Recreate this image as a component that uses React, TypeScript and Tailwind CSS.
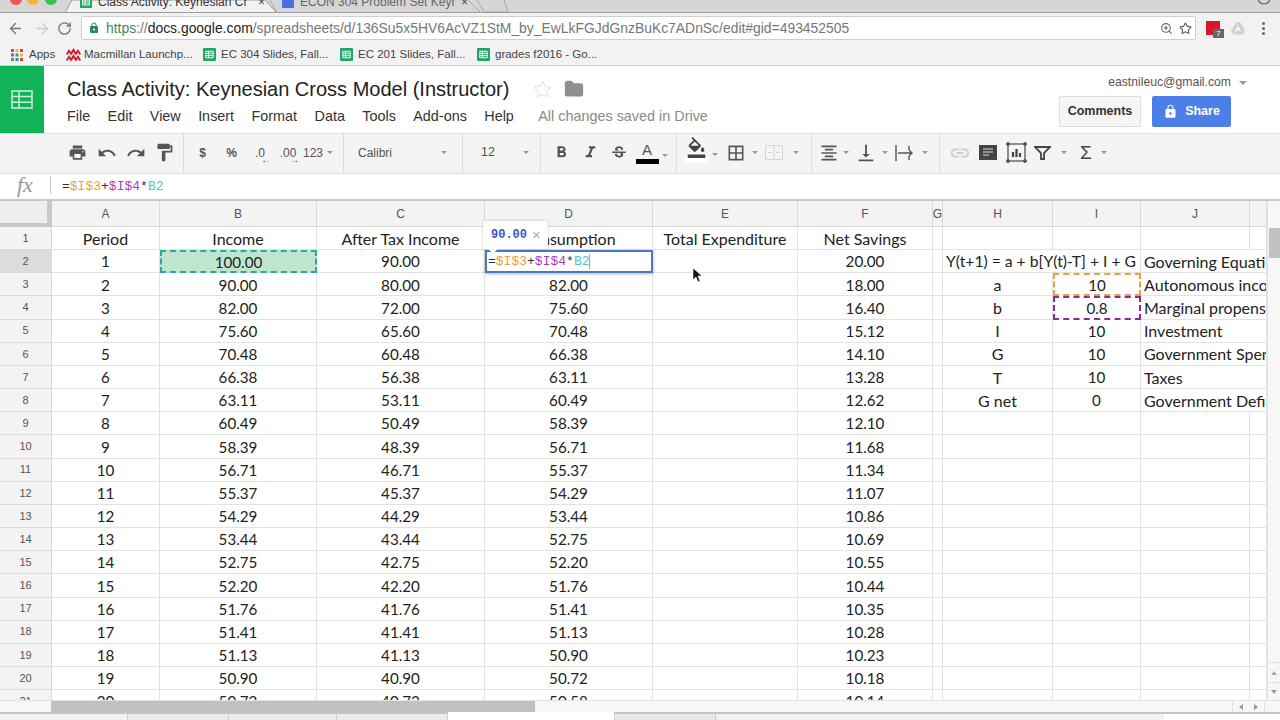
import { Fragment } from 'react';
import { ArrowLeft, ArrowRight, RotateCw, Star, ZoomIn, Folder } from 'lucide-react';
import {
  MdPrint, MdUndo, MdRedo, MdFormatPaint, MdFormatBold, MdFormatItalic, MdStrikethroughS,
  MdFormatColorFill, MdBorderAll, MdFormatAlignCenter, MdVerticalAlignBottom, MdLink, MdLock,
} from 'react-icons/md';

const rows: string[][] = [
  ['1', '100.00', '90.00', '', '20.00'],
  ['2', '90.00', '80.00', '82.00', '18.00'],
  ['3', '82.00', '72.00', '75.60', '16.40'],
  ['4', '75.60', '65.60', '70.48', '15.12'],
  ['5', '70.48', '60.48', '66.38', '14.10'],
  ['6', '66.38', '56.38', '63.11', '13.28'],
  ['7', '63.11', '53.11', '60.49', '12.62'],
  ['8', '60.49', '50.49', '58.39', '12.10'],
  ['9', '58.39', '48.39', '56.71', '11.68'],
  ['10', '56.71', '46.71', '55.37', '11.34'],
  ['11', '55.37', '45.37', '54.29', '11.07'],
  ['12', '54.29', '44.29', '53.44', '10.86'],
  ['13', '53.44', '43.44', '52.75', '10.69'],
  ['14', '52.75', '42.75', '52.20', '10.55'],
  ['15', '52.20', '42.20', '51.76', '10.44'],
  ['16', '51.76', '41.76', '51.41', '10.35'],
  ['17', '51.41', '41.41', '51.13', '10.28'],
  ['18', '51.13', '41.13', '50.90', '10.23'],
  ['19', '50.90', '40.90', '50.72', '10.18'],
  ['20', '50.72', '40.72', '50.58', '10.14'],
];

const params = [
  ['a', '10', 'Autonomous income'],
  ['b', '0.8', 'Marginal propensity'],
  ['I', '10', 'Investment'],
  ['G', '10', 'Government Spending'],
  ['T', '10', 'Taxes'],
  ['G net', '0', 'Government Deficit'],
];

const cell = 'flex items-center justify-center border-r border-b border-[#e2e2e2] whitespace-nowrap pt-[1px]';
const label = 'text-[16px]';
const rowHead = 'flex items-center justify-center border-r border-b border-[#d9d9d9] text-[11px] text-[#555]';
const colHead = 'flex items-center justify-center border-r border-b border-[#d9d9d9] bg-[#f3f3f3] text-[12px] text-[#555]';
const menus = ['File', 'Edit', 'View', 'Insert', 'Format', 'Data', 'Tools', 'Add-ons', 'Help'];

function SheetIcon({ size = 13 }: { size?: number }) {
  return (
    <svg width={size} height={size} viewBox="0 0 14 14">
      <rect width="14" height="14" rx="1" fill="#23a566" />
      <path d="M3 3.5h8v7H3z M3 5.8h8 M3 8.2h8 M6 3.5v7" fill="none" stroke="#fff" strokeWidth="1" />
    </svg>
  );
}

function Caret({ className = '' }: { className?: string }) {
  return <span className={`inline-block h-0 w-0 border-x-[3px] border-t-[3px] border-x-transparent border-t-[#999] ${className}`} />;
}

function Slot({ w, children }: { w: string; children: React.ReactNode }) {
  return <div className={`flex shrink-0 items-center justify-center ${w}`}>{children}</div>;
}

function Formula() {
  return (
    <span className="font-['Liberation_Mono',monospace] text-[13px] text-[#333]">
      =<span className="text-[#e5a33d]">$I$3</span>+<span className="text-[#a53fb3]">$I$4</span>*<span className="text-[#53c4d2]">B2</span>
    </span>
  );
}

function ChromeBars() {
  return (
    <>
      <div className="relative h-[13px] shrink-0 overflow-hidden border-b border-[#9c9c9c] bg-[#d6d6d6]">
        <svg className="absolute inset-0" width="1280" height="13">
          <path d="M65 13 L72 0 H265 L277 13 Z" fill="#f2f2f2" stroke="#9c9c9c" />
          <path d="M277 13 L270 0 M468 0 L481 13 M477 0 L484 12 H508 L504 0" fill="none" stroke="#a5a5a5" />
          <circle cx="16" cy="-1" r="6" fill="#f0544c" />
          <circle cx="33" cy="-1" r="6" fill="#f2b53c" />
          <circle cx="51" cy="-1" r="6" fill="#3cc04c" />
          <circle cx="1264" cy="-2" r="6" fill="none" stroke="#666" strokeWidth="1.2" />
        </svg>
        <div className="relative -mt-[6px] flex h-[16px] items-center text-[12px]">
          <div className="ml-[80px] flex w-[187px] items-center">
            <SheetIcon size={12} />
            <span className="ml-[6px] w-[157px] overflow-hidden whitespace-nowrap text-[#333]">Class Activity: Keynesian Cr</span>
            <span className="ml-[3px] text-[#444]">×</span>
          </div>
          <div className="ml-[15px] flex w-[190px] items-center">
            <span className="h-[12px] w-[12px] rounded-[1px] bg-[#4e6fe0]" />
            <span className="ml-[6px] w-[156px] overflow-hidden whitespace-nowrap text-[#666]">ECON 304 Problem Set Keyne</span>
            <span className="ml-[5px] text-[#444]">×</span>
          </div>
        </div>
      </div>
      <div className="flex h-[30px] shrink-0 items-center bg-[#f2f2f2]">
        <ArrowLeft size={17} className="ml-[7px] text-[#777]" strokeWidth={1.8} />
        <ArrowRight size={17} className="ml-[10px] text-[#ccc]" strokeWidth={1.8} />
        <RotateCw size={15} className="ml-[6px] text-[#777]" strokeWidth={2.2} />
        <div className="ml-[9px] flex h-[24px] w-[1115px] items-center rounded-[2px] border border-[#cfcfcf] bg-white pl-[6px] pr-[3px]">
          <MdLock size={12} className="text-[#2b8a57]" />
          <span className="ml-[6px] whitespace-nowrap text-[13.900px] text-[#777]">
            <span className="text-[#3b8a5e]">https</span>://<span className="text-[#222]">docs.google.com</span>/spreadsheets/d/136Su5x5HV6AcVZ1StM_by_EwLkFGJdGnzBuKc7ADnSc/edit#gid=493452505
          </span>
          <ZoomIn size={13} className="ml-auto text-[#666]" />
          <Star size={13} className="ml-[6px] text-[#555]" />
        </div>
        <div className="relative ml-[10px] h-[14px] w-[14px] bg-[#d6182a]">
          <span className="absolute -bottom-[3px] left-[7px] flex h-[9px] w-[11px] items-center justify-center bg-[#666] text-[8px] text-white">7</span>
        </div>
        <svg className="ml-[11px]" width="14" height="13" viewBox="0 0 14 13">
          <path d="M5 0h4l5 8.5H10L5 0zM4.500 1 0 9l2 3.500L6.500 4.500zM5 9h9l-2 3.500H3z" fill="#d0d0d0" />
        </svg>
        <div className="ml-[17px] flex flex-col gap-[2px]">
          <span className="h-[3px] w-[3px] rounded-full bg-[#666]" />
          <span className="h-[3px] w-[3px] rounded-full bg-[#666]" />
          <span className="h-[3px] w-[3px] rounded-full bg-[#666]" />
        </div>
      </div>
      <div className="flex h-[23px] shrink-0 items-center border-b border-[#d0d0d0] bg-[#f2f2f2] pt-[1px] text-[11.500px] text-[#444]">
        <svg className="ml-[11px]" width="12" height="12" viewBox="0 0 12 12">
          {['#d9453d', '#f2b53c', '#d9453d', '#3c78d8', '#34a853', '#f2b53c', '#34a853', '#3c78d8', '#d9453d'].map((c, i) => (
            <rect key={i} x={(i % 3) * 4.5} y={Math.floor(i / 3) * 4.500} width="3" height="3" fill={c} />
          ))}
        </svg>
        <span className="ml-[6px] w-[37px]">Apps</span>
        <svg width="15" height="14" viewBox="0 0 15 14">
          <path d="M0 6 3 1l2 3 2.500-4L10 4l2-3 3 5-1.500 1L12 4.500 10 7.500 7.500 4 5 7.500 3 4.500 1.500 7z M0 12 3 7l2 3 2.500-4L10 10l2-3 3 5-1.500 1-1.500-2.500-2 3-2.500-3.500-2.500 3.500-2-3L1.500 13z" fill="#d8182c" />
        </svg>
        <span className="ml-[3px] w-[119px] whitespace-nowrap">Macmillan Launchp...</span>
        <SheetIcon />
        <span className="ml-[5px] w-[119px] whitespace-nowrap">EC 304 Slides, Fall...</span>
        <SheetIcon />
        <span className="ml-[5px] w-[119px] whitespace-nowrap">EC 201 Slides, Fall...</span>
        <SheetIcon />
        <span className="ml-[5px] whitespace-nowrap">grades f2016 - Go...</span>
      </div>
    </>
  );
}

function DocHeader() {
  return (
    <div className="flex h-[67px] shrink-0 bg-white">
      <div className="flex w-[44px] items-center justify-center bg-[#10b355]">
        <svg width="22" height="19" viewBox="0 0 22 19" fill="none" stroke="#c9f0d8" strokeWidth="1.5">
          <path d="M1 1h20v17H1z M1 6.500h20 M1 12.200h20 M8 1v17" />
        </svg>
      </div>
      <div className="ml-[23px] flex flex-col">
        <div className="mt-[11px] flex h-[24px] items-center">
          <span className="whitespace-nowrap text-[20px] text-[#222]">Class Activity: Keynesian Cross Model (Instructor)</span>
          <Star size={19} className="ml-[24px] text-[#e6e6e6]" strokeWidth={1.5} />
          <Folder size={20} className="ml-[12px] text-[#8f8f8f]" fill="#8f8f8f" />
        </div>
        <div className="mt-[6px] flex h-[20px] items-center gap-[17.400px] text-[14.400px] text-[#333]">
          {menus.map((m) => (
            <span key={m}>{m}</span>
          ))}
          <span className="ml-[7px] whitespace-nowrap text-[#8a8a8a]">All changes saved in Drive</span>
        </div>
      </div>
      <div className="ml-auto mr-[49px] flex flex-col items-end">
        <div className="mt-[8px] flex h-[16px] items-center text-[12.200px] text-[#555]">
          eastnileuc@gmail.com
        </div>
        <div className="mt-[6px] mr-0 flex gap-[11px]">
          <div className="flex h-[31px] w-[82px] items-center justify-center rounded-[2px] border border-[#dcdcdc] bg-[#f5f5f5] text-[12.500px] font-bold text-[#333]">Comments</div>
          <div className="flex h-[31px] w-[79px] items-center justify-center gap-[7px] rounded-[2px] bg-[#4d7fe8] text-[12.500px] font-bold text-white">
            <MdLock size={15} />
            Share
          </div>
        </div>
      </div>
      <Caret className="absolute left-[1239px] top-[81px] border-x-[4px] border-t-[4px] border-t-[#777]" />
    </div>
  );
}

function Toolbar() {
  const icon = 'shrink-0 text-[#555]';
  const sep = 'flex h-full shrink-0 items-center border-r border-[#dcdcdc] pb-[2px]';
  return (
    <div className="flex h-[41px] shrink-0 items-center border-y border-[#e0e0e0] bg-[#f4f4f4] text-[#555]">
      <div className={`${sep} w-[184px] pl-[63px]`}>
        <Slot w="w-[29px]"><MdPrint size={19} className={icon} /></Slot>
        <Slot w="w-[29px]"><MdUndo size={20} className={icon} /></Slot>
        <Slot w="w-[29px]"><MdRedo size={20} className={icon} /></Slot>
        <Slot w="w-[29px]"><MdFormatPaint size={21} className={icon} /></Slot>
      </div>
      <div className={`${sep} w-[160px] pl-[4px] text-[12px] font-bold`}>
        <Slot w="w-[29px]">$</Slot>
        <Slot w="w-[29px]">%</Slot>
        <Slot w="w-[28px]">
          <span className="relative font-normal">.0<span className="absolute -right-[6px] top-[8px] text-[10px] font-bold">←</span></span>
        </Slot>
        <Slot w="w-[28px]">
          <span className="relative font-normal">.00<span className="absolute -right-[3px] top-[8px] text-[10px] font-bold">→</span></span>
        </Slot>
        <span className="ml-[1px] font-normal">123</span>
        <Caret className="ml-[4px]" />
      </div>
      <div className={`${sep} w-[119px] justify-between pl-[14px] pr-[15px] text-[12px] font-bold`}>
        <span className="font-normal">Calibri</span>
        <Caret />
      </div>
      <div className={`${sep} w-[78px] justify-between pl-[18px] pr-[11px] text-[12.500px]`}>
        <span>12</span>
        <Caret />
      </div>
      <div className={`${sep} w-[136px] pl-[5px]`}>
        <Slot w="w-[30px]"><MdFormatBold size={19} className={icon} /></Slot>
        <Slot w="w-[28px]"><MdFormatItalic size={19} className={icon} /></Slot>
        <Slot w="w-[29px]"><MdStrikethroughS size={18} className={icon} /></Slot>
        <Slot w="w-[28px]">
          <div className="flex flex-col items-center">
            <span className="text-[15px] leading-[16px]">A</span>
            <span className="mt-[1px] h-[5px] w-[23px] bg-black" />
          </div>
        </Slot>
        <Caret className="ml-[1px] mt-[6px]" />
      </div>
      <div className={`${sep} w-[135px] pl-[6px]`}>
        <Slot w="w-[26px]">
          <div className="flex flex-col items-center">
            <MdFormatColorFill size={21} className="-mt-[6px] text-[#444]" />
            <span className="h-[5px] w-[24px] bg-white" />
          </div>
        </Slot>
        <Caret className="ml-[3px] mt-[3px]" />
        <MdBorderAll size={20} className={`${icon} ml-[8px]`} />
        <Caret className="ml-[6px]" />
        <svg className="ml-[7px]" width="18" height="15" viewBox="0 0 18 15" fill="none" stroke="#d5d5d5">
          <path d="M.5.500h17v14H.5z M9 .5v14 M3 7.500h4 M11 7.500h4" />
        </svg>
        <Caret className="ml-[10px]" />
      </div>
      <div className={`${sep} w-[128px] pl-[6px]`}>
        <Slot w="w-[22px]"><MdFormatAlignCenter size={20} className={icon} /></Slot>
        <Caret className="ml-[3px]" />
        <MdVerticalAlignBottom size={22} className={`${icon} ml-[6px]`} />
        <Caret className="ml-[5px]" />
        <svg className="ml-[7px] shrink-0" width="20" height="18" viewBox="0 0 20 18" fill="none" stroke="#555" strokeWidth="1.4">
          <path d="M1 1v16 M14 2v4 M14 12v4 M3 9h14 M14 6l3 3-3 3" />
        </svg>
        <Caret className="ml-[7px]" />
      </div>
      <div className="flex h-full items-center pb-[2px] pl-[9px]">
        <MdLink size={22} className="text-[#cfcfcf]" />
        <svg className="ml-[8px]" width="18" height="15" viewBox="0 0 18 15">
          <path d="M0 0h18v15H0z" fill="#444" />
          <path d="M4 4h10M4 7h10M4 10h6" stroke="#ddd" strokeWidth="1.200" />
        </svg>
        <svg className="ml-[9px]" width="21" height="21" viewBox="0 0 21 21" fill="none" stroke="#555">
          <rect x="2" y="2" width="17" height="17" strokeWidth="1.300" />
          <circle cx="2" cy="2" r="1.500" fill="#555" />
          <circle cx="19" cy="2" r="1.500" fill="#555" />
          <circle cx="2" cy="19" r="1.500" fill="#555" />
          <circle cx="19" cy="19" r="1.500" fill="#555" />
          <path d="M7 15V10M10.500 15V7M14 15v-4" strokeWidth="2.200" stroke="#444" />
        </svg>
        <svg className="ml-[7px]" width="17" height="14" viewBox="0 0 17 14" fill="none" stroke="#444" strokeWidth="1.800">
          <path d="M1 1h15L10 7v6H7V7z" />
        </svg>
        <Caret className="ml-[10px]" />
        <span className="ml-[13px] text-[19px] leading-none text-[#444]">Σ</span>
        <Caret className="ml-[9px]" />
      </div>
    </div>
  );
}

function Sheet() {
  return (
    <div className="flex h-[501px] shrink-0 border-t-2 border-[#c8c8c8] font-['Lato',sans-serif]">
      <div className="relative w-[1267px] shrink-0 overflow-hidden bg-white">
        <div className="grid auto-rows-[23.16px] grid-cols-[52px_108px_157px_168px_168px_145px_135px_10px_110px_88px_109px_17px] grid-rows-[26px] text-[15.200px] text-[#222]">
          <div className="border-r-[5px] border-b-[4px] border-[#c8c8c8] bg-[#efefef]" />
          {['A', 'B', 'C', 'D', 'E', 'F', 'G', 'H', 'I', 'J', ''].map((c) => (
            <div key={c} className={`${colHead} font-['Liberation_Sans',sans-serif] ${c === 'D' ? 'bg-[#dcdcdc]' : ''}`}>{c}</div>
          ))}
          <div className={`${rowHead} bg-[#f3f3f3] font-['Liberation_Sans',sans-serif]`}>1</div>
          {['Period', 'Income', 'After Tax Income', 'Consumption', 'Total Expenditure', 'Net Savings', '', '', '', '', ''].map((t, i) => (
            <div key={i} className={`${cell} ${label}`}>{t}</div>
          ))}
          {rows.map((r, i) => {
            const n = i + 2;
            const p = params[i - 1];
            return (
              <Fragment key={n}>
                <div className={`${rowHead} font-['Liberation_Sans',sans-serif] ${n === 2 ? 'bg-[#dcdcdc]' : 'bg-[#f3f3f3]'}`}>{n}</div>
                <div className={cell}>{r[0]}</div>
                {n === 2 ? (
                  <div className="flex items-center justify-center border-2 border-dashed border-[#2ea5a8] bg-[#bce6ce] pt-[1px]">{r[1]}</div>
                ) : (
                  <div className={cell}>{r[1]}</div>
                )}
                <div className={cell}>{r[2]}</div>
                {n === 2 ? (
                  <div className="z-10 flex items-center border-2 border-[#4a78c8] bg-white pl-[1px] shadow-[0_1px_3px_rgba(0,0,0,0.3)]">
                    <Formula />
                    <span className="h-[15px] w-px bg-[#53c4d2]" />
                  </div>
                ) : (
                  <div className={cell}>{r[3]}</div>
                )}
                <div className={cell} />
                <div className={cell}>{r[4]}</div>
                <div className={cell} />
                {n === 2 && (
                  <>
                    <div className={`${cell} col-span-2 pr-[1px] text-[15.700px]`}>Y(t+1) = a + b[Y(t)-T] + I + G</div>
                    <div className={`${cell} ${label} col-span-2 justify-start overflow-hidden pl-[3px]`}>Governing Equations</div>
                  </>
                )}
                {p && (
                  <>
                    <div className={`${cell} ${label}`}>{p[0]}</div>
                    {n === 3 || n === 4 ? (
                      <div className={`z-10 flex items-center justify-center border-2 border-dashed pt-[1px] ${n === 3 ? 'border-[#e5a33d]' : 'border-[#8e2b96]'}`}>{p[1]}</div>
                    ) : (
                      <div className={cell}>{p[1]}</div>
                    )}
                    <div className={`${cell} ${label} col-span-2 justify-start overflow-hidden pl-[3px]`}>{p[2]}</div>
                  </>
                )}
                {n > 8 && (
                  <>
                    <div className={cell} />
                    <div className={cell} />
                    <div className={cell} />
                    <div className={cell} />
                  </>
                )}
              </Fragment>
            );
          })}
        </div>
        {/* value preview over the cell being edited */}
        <div className="absolute left-[483px] top-[20px] z-20 flex h-[28px] w-[65px] items-center rounded-[2px] bg-white pl-[8px] font-['Liberation_Mono',monospace] text-[12px] font-bold text-[#3f57c4] shadow-[0_0_3px_rgba(0,0,0,0.2)]">
          90.00
          <span className="ml-[5px] font-['Liberation_Sans',sans-serif] text-[15px] font-normal text-[#aaa]">×</span>
          <span className="absolute left-[6px] top-[23px] h-[8px] w-[8px] rotate-45 bg-white" />
        </div>
        <svg className="absolute left-[692px] top-[66px] z-20" width="11" height="17" viewBox="0 0 11 17">
          <path d="M1 1v12l3-3 2 5 2-1-2-5h4z" fill="#111" stroke="#fff" strokeWidth="0.6" />
        </svg>
      </div>
      <div className="flex w-[13px] shrink-0 flex-col items-center border-l border-[#e2e2e2] bg-[#f7f7f7]">
        <div className="mt-[27px] h-[30px] w-[11px] bg-[#c2c2c2]" />
        <div className="mt-auto flex h-[20px] w-full items-center justify-center border-t border-[#e2e2e2] text-[#aaa]">
          <span className="h-0 w-0 border-x-[3px] border-b-[4px] border-x-transparent border-b-[#aaa]" />
        </div>
        <div className="flex h-[18px] w-full items-center justify-center border-t border-[#e2e2e2]">
          <Caret className="border-t-[4px] border-t-[#888]" />
        </div>
      </div>
    </div>
  );
}

function Bottom() {
  return (
    <>
      <div className="flex h-[12px] shrink-0 border-t border-[#e2e2e2] bg-[#f7f7f7]">
        <div className="ml-[51px] h-full w-[484px] bg-[#c0c0c0]" />
        <div className="ml-[697px] flex h-full w-[33px] items-center justify-around border-x border-[#e2e2e2]">
          <span className="h-0 w-0 border-y-[3px] border-r-[4px] border-y-transparent border-r-[#999]" />
          <span className="h-0 w-0 border-y-[3px] border-l-[4px] border-y-transparent border-l-[#999]" />
        </div>
      </div>
      <div className="flex h-[8px] shrink-0 border-t-2 border-[#c4c4c4] bg-[#f2f2f2]">
        <div className="w-[127px]" />
        <div className="w-[101px] border-l border-[#cfcfcf] bg-[#ececec]" />
        <div className="w-[108px] border-l border-[#cfcfcf] bg-[#ececec]" />
        <div className="w-[112px] border-x border-[#cfcfcf] bg-[#ececec]" />
        <div className="-mt-[2px] w-[166px] bg-white" />
        <div className="w-[102px] border-x border-[#cfcfcf] bg-[#e8e8e8]" />
        <div className="w-[448px]" />
        <div className="flex-1 bg-white" />
      </div>
    </>
  );
}

export default function App() {
  return (
    <div className="relative flex h-[720px] w-[1280px] flex-col overflow-hidden bg-white font-['Liberation_Sans',sans-serif]">
      <ChromeBars />
      <DocHeader />
      <Toolbar />
      {/* formula bar */}
      <div className="flex h-[25px] shrink-0 items-center bg-white pb-[3px]">
        <span className="ml-[17px] w-[33px] font-['Liberation_Serif',serif] text-[22px] italic leading-none text-[#999]">fx</span>
        <span className="h-[18px] w-px bg-[#ccc]" />
        <span className="ml-[11px]"><Formula /></span>
      </div>
      <Sheet />
      <Bottom />
    </div>
  );
}
